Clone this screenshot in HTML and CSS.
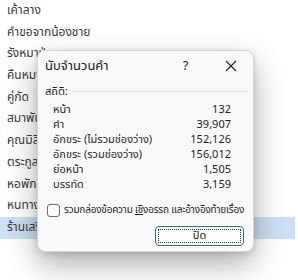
FILE: index.html
```html
<!DOCTYPE html>
<html lang="th">
<head>
    <meta charset="UTF-8">
    <title>นับจำนวนคำ</title>
    <link rel="stylesheet" href="styles.css">
</head>
<body>
    <div class="doc-list">
        <div class="doc-item">เค้าลาง</div>
        <div class="doc-item">คำขอจากน้องชาย</div>
        <div class="doc-item">รังหมาป่า</div>
        <div class="doc-item">คืนหมาหอน</div>
        <div class="doc-item">คู่กัด</div>
        <div class="doc-item">สมาพันธ์</div>
        <div class="doc-item">คุณมิลิน</div>
        <div class="doc-item">ตระกูลเก่า</div>
        <div class="doc-item">หอพักสตรี</div>
        <div class="doc-item">หนทางรัก</div>
        <div class="doc-item selected">ร้านเสริมสวย</div>
    </div>

    <div class="dialog">
        <div class="title-bar">
            <span class="title">นับจำนวนคำ</span>
            <span class="title-btn help">?</span>
            <span class="title-btn close">
                <svg width="12" height="12" viewBox="0 0 12 12">
                    <path d="M1 1 L11 11 M11 1 L1 11" stroke="#222" stroke-width="1.1" fill="none"/>
                </svg>
            </span>
        </div>

        <div class="group-head">
            <span>สถิติ:</span>
            <span class="group-line"></span>
        </div>

        <div class="stats">
            <div class="stat-row"><span>หน้า</span><span>132</span></div>
            <div class="stat-row"><span>คำ</span><span>39,907</span></div>
            <div class="stat-row"><span>อักขระ (ไม่รวมช่องว่าง)</span><span>152,126</span></div>
            <div class="stat-row"><span>อักขระ (รวมช่องว่าง)</span><span>156,012</span></div>
            <div class="stat-row"><span>ย่อหน้า</span><span>1,505</span></div>
            <div class="stat-row"><span>บรรทัด</span><span>3,159</span></div>
        </div>

        <label class="check-row">
            <span class="check-box"></span>
            <span class="check-text">รวมกล่องข้อความ <u>เชิ</u>งอรรถ และอ้างอิงท้ายเรื่อง</span>
        </label>

        <div class="actions">
            <button class="close-btn"><span class="focus-ring">ปิด</span></button>
        </div>
    </div>
</body>
</html>
```

FILE: styles.css
```css
* {
    margin: 0;
    padding: 0;
    box-sizing: border-box;
}

body {
    font-family: "Leelawadee UI", "Noto Sans Thai", "Tahoma", sans-serif;
    font-size: 12px;
    color: #1f1f1f;
    background: #ffffff;
    width: 298px;
    height: 280px;
    overflow: hidden;
    position: relative;
}

.doc-list {
    width: 295px;
}

.doc-item {
    height: 21.7px;
    line-height: 21.7px;
    padding-left: 7px;
    color: #3a3a3a;
    white-space: nowrap;
}

.doc-item.selected {
    background: #cddff4;
}

.dialog {
    position: absolute;
    left: 37px;
    top: 50px;
    width: 217px;
    height: 202px;
    background: #f9f9f9;
    border: 1px solid #d6d6d6;
    border-radius: 8px;
    box-shadow: 0 12px 30px rgba(0, 0, 0, 0.32), 0 2px 6px rgba(0, 0, 0, 0.12);
    padding: 0 0 0 7px;
    display: flex;
    flex-direction: column;
}

.title-bar {
    height: 29px;
    display: flex;
    align-items: center;
}

.title {
    flex: 1;
    font-size: 13px;
    color: #1a1a1a;
}

.title-btn {
    width: 45px;
    height: 29px;
    display: flex;
    align-items: center;
    justify-content: center;
    font-size: 13px;
    color: #222;
}

.group-head {
    display: flex;
    align-items: center;
    margin-top: 4px;
    height: 14px;
    font-size: 11px;
    padding-right: 5px;
}

.group-line {
    flex: 1;
    height: 1px;
    background: #dcdcdc;
    margin-left: 4px;
}

.stats {
    margin-top: 4px;
    padding-left: 8px;
    padding-right: 22px;
}

.stat-row {
    display: flex;
    justify-content: space-between;
    height: 15px;
    line-height: 15px;
    font-size: 11px;
}

.check-row {
    display: flex;
    align-items: center;
    gap: 4px;
    margin-top: 11px;
    margin-left: 2px;
    height: 14px;
    white-space: nowrap;
}

.check-box {
    flex-shrink: 0;
    width: 13px;
    height: 13px;
    border: 1px solid #6b6b6b;
    border-radius: 3px;
    background: #fbfbfb;
}

.check-text {
    font-size: 10px;
    letter-spacing: -0.2px;
}

.actions {
    display: flex;
    justify-content: flex-end;
    margin-top: 9px;
    padding-right: 9px;
}

.close-btn {
    width: 89px;
    height: 20px;
    border: 1px solid #2a6fbf;
    border-radius: 4px;
    background: #fdfdfd;
    padding: 2px;
    font-family: inherit;
    font-size: 11px;
    color: #1a1a1a;
}

.focus-ring {
    display: block;
    height: 100%;
    border: 1px dotted #333;
    line-height: 12px;
}
```
